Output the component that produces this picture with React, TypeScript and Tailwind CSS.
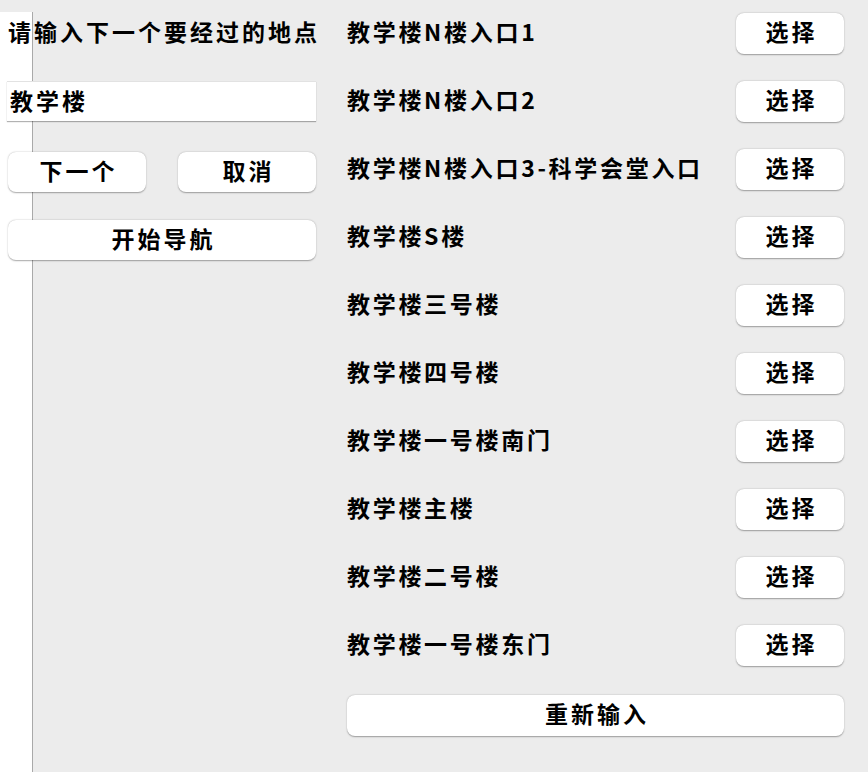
import React from 'react';

const places = [
    '教学楼N楼入口1',
    '教学楼N楼入口2',
    '教学楼N楼入口3-科学会堂入口',
    '教学楼S楼',
    '教学楼三号楼',
    '教学楼四号楼',
    '教学楼一号楼南门',
    '教学楼主楼',
    '教学楼二号楼',
    '教学楼一号楼东门',
];

const btn =
    'bg-white rounded-[8px] shadow-[0_0.5px_1.5px_rgba(0,0,0,0.35)] flex items-center justify-center text-[23px] leading-none font-bold text-black tracking-[3px]';

function Label({ children }: { children: React.ReactNode }) {
    return <span className="-translate-y-[2px] pl-[3px]">{children}</span>;
}

export default function App() {
    return (
        <div
            className="w-[868px] h-[772px] bg-[#ececec] relative overflow-hidden text-black"
            style={{ fontFamily: '"Noto Sans CJK SC", "Noto Sans", sans-serif' }}
        >
            {/* window edge behind */}
            <div className="absolute left-0 top-[12px] bottom-0 w-[33px] bg-white border-r border-[#a9a9a9]" />
            <div className="relative flex pl-2 pt-[13px] gap-[31px]">
                <div className="w-[308px] flex flex-col">
                    <div className="h-[41px] flex items-center text-[23px] leading-none font-bold tracking-[3px] whitespace-nowrap">
                        <span className="-translate-y-[2px]">请输入下一个要经过的地点</span>
                    </div>
                    <div className="mt-[27px] -ml-px w-[309px] h-[40px] bg-white border-t border-[#e2e2e2] shadow-[0_1px_1px_rgba(0,0,0,0.3)] flex items-center pl-[3px] text-[23px] leading-none font-bold tracking-[3px]">
                        <span className="-translate-y-[1px]">教学楼</span>
                    </div>
                    <div className="mt-[31px] flex gap-[32px]">
                        <div className={`${btn} w-[138px] h-[40px]`}><Label>下一个</Label></div>
                        <div className={`${btn} w-[138px] h-[40px]`}><Label>取消</Label></div>
                    </div>
                    <div className={`${btn} mt-[28px] w-[308px] h-[40px]`}><Label>开始导航</Label></div>
                </div>
                <div className="w-[497px] flex flex-col gap-[27px]">
                    {places.map((p) => (
                        <div key={p} className="h-[41px] flex items-center justify-between">
                            <span className="-translate-y-[2px] text-[23px] leading-none font-bold tracking-[2.7px] whitespace-nowrap">{p}</span>
                            <div className={`${btn} w-[108px] h-[41px]`}><Label>选择</Label></div>
                        </div>
                    ))}
                    <div className={`${btn} mt-[2px] w-[497px] h-[41px]`}><Label>重新输入</Label></div>
                </div>
            </div>
        </div>
    );
}
